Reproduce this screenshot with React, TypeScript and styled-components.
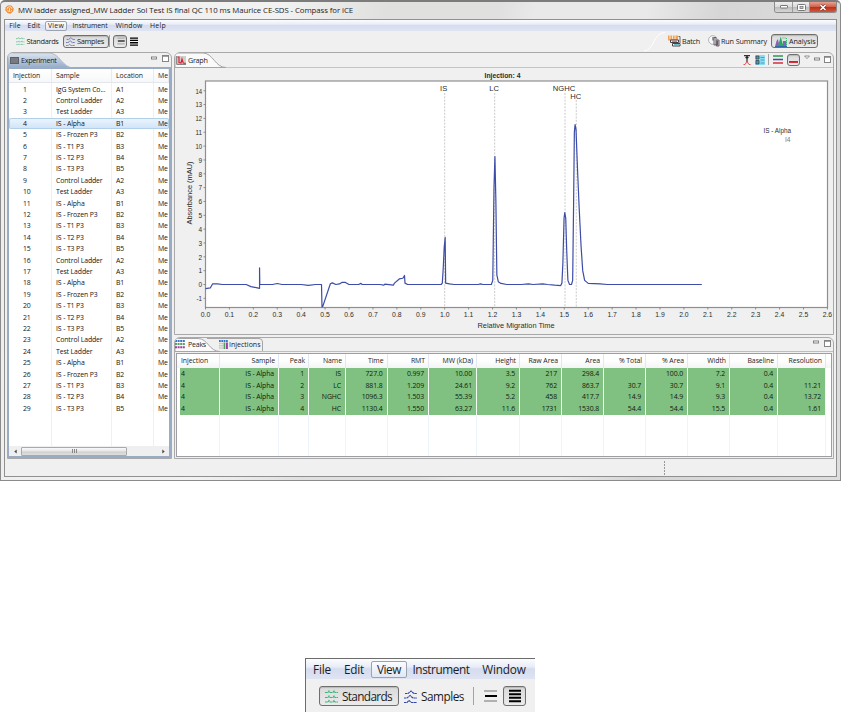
import React from 'react';
import styled, { createGlobalStyle, css } from 'styled-components';

const UI = '"Open Sans", "Noto Sans", sans-serif';
const ARIAL = '"Liberation Sans", Arial, sans-serif';

const GlobalStyle = createGlobalStyle`
  * { box-sizing: border-box; }
  body { margin: 0; background: #fff; font-family: ${UI}; color: #1c1c1c; }
  svg { display: block; flex: none; }
`;

/* ---------- text tracked to a given width ---------- */

const ctx = document.createElement('canvas').getContext('2d')!;

const Tracked = styled.span<{ $size: number; $weight: number }>`
  font-family: ${UI};
  font-size: ${(p) => p.$size}px;
  font-weight: ${(p) => p.$weight};
  white-space: pre;
  flex: none;
  display: block;
`;

function FitText({ text, width, size, weight = 400 }: { text: string; width: number; size: number; weight?: number }) {
  ctx.font = `${weight} ${size}px ${UI}`;
  const spacing = (width - ctx.measureText(text).width) / text.length;
  return (
    <Tracked $size={size} $weight={weight} style={{ letterSpacing: spacing, width }}>
      {text}
    </Tracked>
  );
}

/* ---------- page and window frame ---------- */

const Page = styled.div`
  width: 841px;
  height: 712px;
  overflow: hidden;
  display: flex;
  flex-direction: column;
  background: #fff;
`;

const Window = styled.div`
  width: 841px;
  height: 481px;
  border: 1px solid #8b8b8b;
  border-top: 2px solid #7c7c7c;
  border-radius: 5px 5px 0 0;
  background: linear-gradient(100deg, #ededed 0, #f2f2f2 30%, #e0e0de 42%, #e0e0e0 54%, #e9e9e9 58%, #e9e9e9 70%, #d6d6d6 78%, #dedede 100%);
  padding: 0 3px 3px 3px;
  display: flex;
  flex-direction: column;
`;

const TitleBar = styled.div`
  height: 16px;
  margin-bottom: 1px;
  display: flex;
  align-items: center;
  gap: 4px;
  padding: 0 0 1px 1px;
  flex: none;
`;

const CaptionButtons = styled.div`
  margin-left: auto;
  align-self: flex-start;
  display: flex;
  height: 11px;
  border: 1px solid #8c8c8c;
  border-top: 0;
  border-radius: 0 0 3px 3px;
  overflow: hidden;
`;

const CaptionButton = styled.div<{ $w: number; $close?: boolean }>`
  width: ${(p) => p.$w}px;
  display: flex;
  align-items: center;
  justify-content: center;
  background: ${(p) =>
    p.$close ? 'linear-gradient(#e6a193, #d2604a 48%, #bd3018 52%, #d0583c)' : 'linear-gradient(#efefef, #d9d9d9 50%, #bcbcbc 52%, #d6d6d6)'};
  & + & { border-left: 1px solid #999; }
`;

const Client = styled.div`
  flex: 1;
  border: 1px solid #909090;
  background: #f0f0f0;
  display: flex;
  flex-direction: column;
  min-height: 0;
`;

const MenuBar = styled.div<{ $h: number }>`
  height: ${(p) => p.$h}px;
  flex: none;
  display: flex;
  align-items: center;
  background: linear-gradient(#fbfcfe 0, #e9edf7 38%, #d5dcee 50%, #dfe4f3 100%);
`;

const MenuItem = styled.div<{ $w: number; $h: number; $ml: number; $open?: boolean }>`
  width: ${(p) => p.$w}px;
  height: ${(p) => p.$h}px;
  margin-left: ${(p) => p.$ml}px;
  border: 1px solid ${(p) => (p.$open ? '#9ba2b0' : 'transparent')};
  border-radius: 2px;
  display: flex;
  align-items: center;
  justify-content: center;
  ${(p) => p.$open && css`background: linear-gradient(#fbfcff, #e2e7f3);`}
`;

const ToolBar = styled.div`
  height: 21px;
  flex: none;
  display: flex;
  align-items: center;
  padding: 0 18px 1px 7px;
`;

const ToolButton = styled.div<{ $w: number; $h: number; $gap?: number; $ml?: number; $on?: boolean; $pad?: number }>`
  width: ${(p) => p.$w}px;
  height: ${(p) => p.$h}px;
  margin-left: ${(p) => p.$ml ?? 0}px;
  padding-left: ${(p) => p.$pad ?? 0}px;
  gap: ${(p) => p.$gap ?? 3}px;
  display: flex;
  flex: none;
  align-items: center;
  border-radius: 3px;
  border: 1px solid transparent;
  ${(p) =>
    p.$on &&
    css`
      border-color: #6f6f6f;
      background: linear-gradient(#dadada, #ebebeb);
      box-shadow: inset 0 1px 1px #b9b9b9;
    `}
`;

const Divider = styled.div<{ $h: number; $ml: number }>`
  width: 1px;
  height: ${(p) => p.$h}px;
  margin-left: ${(p) => p.$ml}px;
  background: #a3a3a3;
  flex: none;
`;

const PerspectiveEdge = styled.div`
  margin-left: auto;
  height: 21px;
`;

const Workbench = styled.div`
  display: flex;
  height: 407px;
  flex: none;
  padding-left: 2px;
  gap: 2px;
`;

const StatusBar = styled.div`
  flex: 1;
  display: flex;
  padding: 2px 0 0 659px;
`;

const Grip = styled.div`
  width: 1px;
  height: 14px;
  background: repeating-linear-gradient(#999 0 2px, transparent 2px 3px);
`;

/* ---------- view panels ---------- */

const Panel = styled.div<{ $w: number; $h: number }>`
  width: ${(p) => p.$w}px;
  height: ${(p) => p.$h}px;
  border: 1px solid #a9a9a9;
  border-radius: 6px 6px 0 0;
  overflow: hidden;
  display: flex;
  flex-direction: column;
  flex: none;
`;

const RightColumn = styled.div`
  display: flex;
  flex-direction: column;
  gap: 2px;
`;

const TabStrip = styled.div<{ $h: number; $line: string }>`
  height: ${(p) => p.$h}px;
  flex: none;
  display: flex;
  align-items: center;
  position: relative;
  border-bottom: 1px solid ${(p) => p.$line};
`;

const TabShape = styled.svg`
  position: absolute;
  left: 0;
  top: 0;
`;

const Tab = styled.div<{ $w: number; $pad: number; $gap?: number }>`
  width: ${(p) => p.$w}px;
  padding-left: ${(p) => p.$pad}px;
  height: 100%;
  display: flex;
  align-items: center;
  gap: ${(p) => p.$gap ?? 2}px;
  position: relative;
`;

const ViewControls = styled.div<{ $gap: number; $r: number; $lift?: number }>`
  margin-left: auto;
  margin-right: ${(p) => p.$r}px;
  padding-bottom: ${(p) => p.$lift ?? 0}px;
  display: flex;
  gap: ${(p) => p.$gap}px;
  align-items: center;
`;

/* ---------- experiment list ---------- */

const BlueFrame = styled.div`
  flex: 1;
  background: #9aacc5;
  padding: 1px 2px 2px 1px;
  min-height: 0;
`;

const ListBox = styled.div`
  height: 100%;
  background: #fff;
  display: flex;
  flex-direction: column;
  overflow: hidden;
`;

const listGrid = css`
  display: grid;
  grid-template-columns: 43px 60px 42px 1fr;
`;

const ListHead = styled.div`
  ${listGrid}
  height: 14px;
  flex: none;
  background: linear-gradient(#fff, #f6f7f9);
  border-bottom: 1px solid #e3e6ea;
  align-items: center;
  font-size: 6.9px;
  > * { height: 13px; line-height: 14px; padding-left: 4px; border-right: 1px solid #e6ebf1; overflow: hidden; white-space: nowrap; letter-spacing: -0.05px; }
`;

const ListRows = styled.div`
  flex: 1;
  padding-top: 0.5px;
  background-image: linear-gradient(#e9f2fa, #e9f2fa), linear-gradient(#e9f2fa, #e9f2fa), linear-gradient(#e9f2fa, #e9f2fa);
  background-size: 1px 100%;
  background-repeat: no-repeat;
  background-position: 42px 0, 102px 0, 144px 0;
  min-height: 0;
`;

const ListRow = styled.div<{ $selected?: boolean }>`
  ${listGrid}
  height: 11.41px;
  line-height: 11.8px;
  font-size: 6.9px;
  color: #151515;
  white-space: nowrap;
  overflow: hidden;
  > * { padding-left: 4px; overflow: hidden; letter-spacing: -0.12px; }
  > :first-child { padding-left: 14px; }
  ${(p) =>
    p.$selected &&
    css`
      background: linear-gradient(#edf5fd, #cfe3f7);
      box-shadow: inset 0 0 0 1px #b3d0ea;
      border-radius: 2px;
    `}
`;

const ScrollBar = styled.div`
  height: 10px;
  flex: none;
  display: flex;
  align-items: center;
  background: #efefef;
  padding: 0 4px 0 5px;
`;

const Thumb = styled.div`
  width: 106px;
  height: 9px;
  margin-left: 4px;
  margin-right: auto;
  border: 1px solid #a9a9a9;
  border-radius: 1px;
  background: linear-gradient(#f8f8f8, #e6e6e6 48%, #d0d0d0 52%, #dedede);
  display: flex;
  justify-content: center;
  align-items: center;
  gap: 1px;
  > i { width: 1px; height: 4px; background: #888; }
`;

/* ---------- peaks table ---------- */

const PeakFrame = styled.div`
  flex: 1;
  margin: 1px;
  border: 1px solid #9d9da5;
  background: #fff;
  padding: 0 0 0 3px;
  display: flex;
  flex-direction: column;
  min-height: 0;
`;

const PEAK_COLS = [40, 59, 30, 37, 41.5, 41.5, 48, 43, 42, 42, 42, 42, 42, 48, 48];
const peakGrid = css`
  display: grid;
  grid-template-columns: ${PEAK_COLS.map((w) => `${w}px`).join(' ')};
`;

const PeakHead = styled.div`
  ${peakGrid}
  height: 14px;
  flex: none;
  background: linear-gradient(#fff 40%, #f3f4f6);
  margin-left: -3px;
  padding-left: 3px;
  font-size: 6.9px;
  line-height: 14px;
  > div { text-align: right; padding-right: 3px; border-right: 1px solid #e4e8ee; white-space: nowrap; letter-spacing: -0.06px; }
  > div:first-child { text-align: left; padding-left: 1px; }
`;

const PeakRow = styled.div`
  ${peakGrid}
  height: 11.5px;
  line-height: 12px;
  font-size: 6.9px;
  > div {
    text-align: right;
    padding-right: 4px;
    border-right: 1px solid #f2faf2;
    background: #80c080;
    background-clip: padding-box;
    white-space: nowrap;
    color: #0d200d;
    letter-spacing: -0.12px;
  }
  > div:first-child { text-align: left; padding-left: 1px; }
`;

const PeakEmpty = styled.div`
  ${peakGrid}
  flex: 1;
  > div { border-right: 1px solid #edf4fb; }
`;

/* ---------- toolbar excerpt below the window ---------- */

const Excerpt = styled.div`
  width: 230px;
  height: 54px;
  margin: 177px 0 0 305px;
  border-top: 1px solid #6c6c6c;
  border-left: 1px solid #6c6c6c;
  background: #f0f0f0;
  display: flex;
  flex-direction: column;
`;

const ExcerptTools = styled.div`
  flex: 1;
  display: flex;
  align-items: center;
  padding: 1px 0 0 13px;
`;

/* ---------- icons ---------- */

const TraceIcon = ({ size, color, peaks }: { size: number; color: string; peaks?: boolean }) => (
  <svg width={size} height={size} viewBox="0 0 13 13" fill="none" stroke={color} strokeWidth="1.1">
    {peaks ? (
      <path d="M1 3.5H4L7 1L10 3.5H13M0 8H3L6 5.5L9 8H13M0 12.5H3L5 10.5L7.5 12.5H13" strokeDasharray="2.4 .4" />
    ) : (
      <path d="M0 2.5H3L4 1L5 2.5H8L9 1L10 2.5H13M0 7.5H3L4 6L5 7.5H8L9 6L10 7.5H13M0 12H3L4 10.5L5 12H8L9 10.5L10 12H13" strokeDasharray="2.6 .4" />
    )}
  </svg>
);

const BarsSingle = ({ w, h }: { w: number; h: number }) => (
  <svg width={w} height={h} viewBox="0 0 13 14">
    <path d="M0 2H13M0 12H13" stroke="#b0b0b0" strokeWidth="2" />
    <path d="M1 7H13" stroke="#000" strokeWidth="2" />
  </svg>
);

const BarsStack = ({ w, h }: { w: number; h: number }) => (
  <svg width={w} height={h} viewBox="0 0 13 14">
    <path d="M0 1.4H13M0 5.2H13M0 9H13M0 12.8H13" stroke="#000" strokeWidth="2.2" />
  </svg>
);

const AppIcon = () => (
  <svg width="9" height="9" viewBox="0 0 9 9">
    <path d="M3 .2L6.4 .6L8.8 3.4L8.4 6L5.6 8.8L2.8 8.2L.2 5.2L.8 2.2Z" fill="#f0913a" />
    <path d="M2 4.4A2.5 2.5 0 0 1 7 4M4.5 3V7M2.6 5L3.5 7M6.7 5L5.9 6.6" stroke="#fff0dc" strokeWidth=".8" fill="none" />
  </svg>
);

const BatchIcon = () => (
  <svg width="13" height="12" viewBox="0 0 13 12">
    <path d="M0 .5H10V5.500H0Z" fill="#f0a25a" />
    <path d="M2 0V4M4.5 0V4M7 0V4" stroke="#fff3df" strokeWidth=".8" />
    <path d="M2.500 5H10.500V7.500H2.500ZM4.500 8.500H12V11H4.500Z" fill="#fff" stroke="#4b4044" />
    <path d="M4 6.300H9" stroke="#b33f3f" strokeWidth=".8" />
    <path d="M6 9.800H11" stroke="#35a4b4" />
    <path d="M10.500 1.500H12V8" stroke="#666" fill="none" />
  </svg>
);

const RunIcon = () => (
  <svg width="12" height="12" viewBox="0 0 12 12">
    <circle cx="4.800" cy="5" r="4.300" fill="#f9f9f9" stroke="#a0a4aa" strokeWidth=".8" />
    <path d="M5 2V5.500" stroke="#444" fill="none" />
    <path d="M6 2.500H8V10H6ZM9 5H11V11H8.400Z" fill="#e4e4e8" stroke="#4a444e" strokeWidth=".8" />
    <path d="M9.700 6V10.500" stroke="#8c2638" strokeWidth="1" />
  </svg>
);

const AnalysisIcon = () => (
  <svg width="12" height="11" viewBox="0 0 12 11">
    <path d="M0 10.500L1.500 5L3 3L4.500 10.500Z" fill="#8a5fc0" />
    <path d="M2.800 10.500L5.700 .5L8.500 10.500Z" fill="#2fa663" />
    <path d="M8 10.500V5H11.500V10.500Z" fill="#7c63c8" />
    <path d="M7.500 2H11.500V9" stroke="#3bb26b" strokeDasharray="1 1" fill="none" />
    <path d="M0 10.500H12" stroke="#3168a9" />
  </svg>
);

const GraphIcon = () => (
  <svg width="10" height="9" viewBox="0 0 10 9">
    <path d="M1 0H10V8H1Z" fill="#cfcfcf" />
    <path d="M.7 0V8.400H10" stroke="#777" fill="none" />
    <path d="M1.500 1H3V6.500L5 7L6 3L7.200 7L9.800 7.400" stroke="#dc2430" strokeWidth="1.200" fill="none" />
  </svg>
);

const GridIcon = ({ column }: { column?: boolean }) => (
  <svg width={column ? 9 : 10} height="9" viewBox="0 0 10 9" preserveAspectRatio="none">
    <path d="M0 1H10" stroke="#3a76c4" strokeWidth="2" strokeDasharray="2 .6" />
    {column ? (
      <>
        <path d="M0 3.500H5M0 5.700H5M0 8H5" stroke="#c3c5ba" strokeWidth="1.600" strokeDasharray="2 .5" />
        <path d="M6 2.400V9" stroke="#4ba55c" strokeWidth="1.800" />
        <path d="M8.800 2.400V9" stroke="#a43aa6" strokeWidth="2.200" />
      </>
    ) : (
      <>
        <path d="M0 4H10" stroke="#50a469" strokeWidth="1.800" strokeDasharray="2 .6" />
        <path d="M0 7.300H10" stroke="#a53f99" strokeWidth="2" strokeDasharray="2 .6" />
      </>
    )}
  </svg>
);

const MinIcon = () => (
  <svg width="6" height="6" viewBox="0 0 6 6">
    <rect x=".5" y="1" width="5" height="2" fill="#fff" stroke="#777" strokeWidth=".9" />
  </svg>
);

const MaxIcon = () => (
  <svg width="7" height="7" viewBox="0 0 7 7">
    <rect x=".5" y=".5" width="6" height="6" fill="#fff" stroke="#858585" />
    <path d="M0 1H7" stroke="#858585" strokeWidth="1.300" />
  </svg>
);

const ScrollArrow = ({ right }: { right?: boolean }) => (
  <svg width="3" height="5" viewBox="0 0 3 5">
    <path d={right ? 'M.3 .6L2.7 2.5L.3 4.4Z' : 'M2.7 .6L.3 2.5L2.7 4.4Z'} fill="#444" />
  </svg>
);

/* ---------- data ---------- */

const SAMPLES: [string, string][] = [
  ['IgG System Co...', 'A1'], ['Control Ladder', 'A2'], ['Test Ladder', 'A3'],
  ['IS - Alpha', 'B1'], ['IS - Frozen P3', 'B2'], ['IS - T1 P3', 'B3'], ['IS - T2 P3', 'B4'], ['IS - T3 P3', 'B5'],
  ['Control Ladder', 'A2'], ['Test Ladder', 'A3'],
  ['IS - Alpha', 'B1'], ['IS - Frozen P3', 'B2'], ['IS - T1 P3', 'B3'], ['IS - T2 P3', 'B4'], ['IS - T3 P3', 'B5'],
  ['Control Ladder', 'A2'], ['Test Ladder', 'A3'],
  ['IS - Alpha', 'B1'], ['IS - Frozen P3', 'B2'], ['IS - T1 P3', 'B3'], ['IS - T2 P3', 'B4'], ['IS - T3 P3', 'B5'],
  ['Control Ladder', 'A2'], ['Test Ladder', 'A3'],
  ['IS - Alpha', 'B1'], ['IS - Frozen P3', 'B2'], ['IS - T1 P3', 'B3'], ['IS - T2 P3', 'B4'], ['IS - T3 P3', 'B5'],
];

const PEAK_HEADS = ['Injection', 'Sample', 'Peak', 'Name', 'Time', 'RMT', 'MW (kDa)', 'Height', 'Raw Area', 'Area', '% Total', '% Area', 'Width', 'Baseline', 'Resolution'];
const PEAKS = [
  ['4', 'IS - Alpha', '1', 'IS', '727.0', '0.997', '10.00', '3.5', '217', '298.4', '', '100.0', '7.2', '0.4', ''],
  ['4', 'IS - Alpha', '2', 'LC', '881.8', '1.209', '24.61', '9.2', '762', '863.7', '30.7', '30.7', '9.1', '0.4', '11.21'],
  ['4', 'IS - Alpha', '3', 'NGHC', '1096.3', '1.503', '55.39', '5.2', '458', '417.7', '14.9', '14.9', '9.3', '0.4', '13.72'],
  ['4', 'IS - Alpha', '4', 'HC', '1130.4', '1.550', '63.27', '11.6', '1731', '1530.8', '54.4', '54.4', '15.5', '0.4', '1.61'],
];

/* ---------- electropherogram ---------- */

const X0 = 31.5;
const Y0 = 217.5;
const px = (v: number) => X0 + v * 239.2;
const py = (v: number) => Y0 - v * 13.84;

const TRACE: [number, number][] = [
  [0, -0.3], [0.02, -0.25], [0.03, 0.05], [0.05, 0.04], [0.07, 0], [0.17, 0], [0.19, -0.15], [0.226, -0.28], [0.226, 1.2], [0.227, 0],
  [0.28, 0], [0.3, 0.07], [0.32, 0], [0.4, 0], [0.43, -0.06], [0.46, 0], [0.485, 0], [0.487, -1.6], [0.49, -1.6], [0.522, 0.05], [0.53, 0.12], [0.545, 0],
  [0.56, 0.04], [0.57, 0.15], [0.585, 0.15], [0.6, 0], [0.64, 0], [0.65, 0.08], [0.655, 0], [0.73, 0], [0.745, -0.05], [0.75, 0.03], [0.785, -0.05], [0.79, 0.1],
  [0.81, 0.4], [0.825, 0.45], [0.832, 0.65], [0.834, 0.1], [0.845, 0], [0.985, 0], [0.99, 0.1], [0.994, 1.2], [0.998, 2.7], [1.002, 3.4], [1.004, 0.1], [1.02, 0.05], [1.04, 0],
  [1.14, 0], [1.15, 0.05], [1.16, 0], [1.195, 0], [1.201, 0.3], [1.206, 7], [1.21, 9.25], [1.214, 6], [1.218, 0.7], [1.224, 0.2], [1.235, 0.08],
  [1.26, 0], [1.32, 0], [1.35, 0.05], [1.37, 0], [1.41, 0.05], [1.43, 0], [1.46, -0.05], [1.485, -0.08], [1.49, 0.1], [1.494, 1.5], [1.499, 4.8], [1.502, 5.2], [1.506, 4.8], [1.51, 2.5], [1.515, 0.3],
  [1.522, 0], [1.53, 0], [1.535, 0.3], [1.539, 6], [1.542, 11], [1.545, 11.55], [1.549, 11.2], [1.552, 9.8], [1.556, 8], [1.562, 5.6], [1.57, 2.8], [1.577, 1], [1.585, 0.3], [1.6, 0.08], [1.65, 0.04], [1.68, 0], [2.075, 0],
];

const MARKERS = [
  { name: 'IS', at: 1.0, row: 0, dx: -1 },
  { name: 'LC', at: 1.209, row: 0, dx: -0.5 },
  { name: 'NGHC', at: 1.503, row: 0, dx: -1 },
  { name: 'HC', at: 1.55, row: 1, dx: -0.5 },
];

function Electropherogram() {
  return (
    <svg width="658" height="265" viewBox="1 1 658 265" fontFamily={ARIAL} fontSize="7.6" fill="#2c2c2c">
      <rect x="31.5" y="14" width="622" height="226.500" fill="#fff" stroke="#8f8f8f" strokeWidth="1.200" />
      <text x="310.500" y="10.500" fontSize="6.800" fontWeight="700" textLength="36" lengthAdjust="spacingAndGlyphs">Injection: 4</text>
      {Array.from({ length: 16 }, (_, i) => i - 1).map((v) => (
        <g key={v}>
          <path d={`M29.5 ${py(v)}H31.5`} stroke="#777" strokeWidth=".8" />
          <text x="28" y={py(v) + 2.8} textAnchor="end" textLength={v > 9 ? 6.6 : v < 0 ? 5.5 : 3.6} lengthAdjust="spacingAndGlyphs">{v}</text>
        </g>
      ))}
      {Array.from({ length: 27 }, (_, i) => i / 10).map((v) => (
        <g key={v}>
          <path d={`M${px(v)} 240.5V242.5`} stroke="#777" strokeWidth=".8" />
          <text x={px(v)} y="250" textAnchor="middle" textLength="9.500" lengthAdjust="spacingAndGlyphs">{v.toFixed(1)}</text>
        </g>
      ))}
      <text x="303.500" y="261" textLength="77" lengthAdjust="spacingAndGlyphs">Relative Migration Time</text>
      <text transform="translate(17.5 157.5) rotate(-90)" textLength="63" lengthAdjust="spacingAndGlyphs">Absorbance (mAU)</text>
      {MARKERS.map((m) => (
        <g key={m.name}>
          <path d={`M${px(m.at)} ${m.row ? 33 : 26}V240`} stroke="#bcbcbc" strokeWidth=".8" strokeDasharray="2 1.3" />
          <text x={px(m.at) + m.dx} y={m.row ? 31.8 : 24} textAnchor="middle">{m.name}</text>
        </g>
      ))}
      <polyline points={TRACE.map(([x, y]) => `${px(x).toFixed(2)},${py(y).toFixed(2)}`).join(' ')} fill="none" stroke="#3c4ca8" strokeWidth="1.200" strokeLinejoin="round" />
      <text x="589.500" y="65.800" textLength="27.500" lengthAdjust="spacingAndGlyphs">IS - Alpha</text>
      <text x="616.500" y="75" textAnchor="end" fill="#777" textLength="5.500" lengthAdjust="spacingAndGlyphs">I4</text>
    </svg>
  );
}

/* ---------- views ---------- */

function ExperimentView() {
  return (
    <Panel $w={165} $h={407}>
      <TabStrip $h={15} $line="#9aacc5">
        <TabShape width="163" height="15">
          <defs>
            <linearGradient id="tabBlue" x1="0" y1="0" x2="0" y2="1">
              <stop offset="0" stopColor="#dce5f0" />
              <stop offset="1" stopColor="#94aac7" />
            </linearGradient>
          </defs>
          <path d="M0 0H41C52 0 54 15 66 15H0Z" fill="url(#tabBlue)" stroke="#a3b0c2" strokeWidth=".8" />
        </TabShape>
        <Tab $w={70} $pad={2} $gap={2}>
          <svg width="9" height="7"><rect x=".5" y=".5" width="8" height="6" fill="#777b80" stroke="#5c6168" /></svg>
          <FitText text="Experiment" width={35.5} size={7.2} />
        </Tab>
        <ViewControls $gap={5} $r={2} $lift={3}><MinIcon /><MaxIcon /></ViewControls>
      </TabStrip>
      <BlueFrame>
        <ListBox>
          <ListHead>
            <div>Injection</div>
            <div>Sample</div>
            <div>Location</div>
            <div>Me</div>
          </ListHead>
          <ListRows>
            {SAMPLES.map(([name, loc], i) => (
              <ListRow key={i} $selected={i === 3}>
                <span>{i + 1}</span>
                <span>{name}</span>
                <span>{loc}</span>
                <span>Me</span>
              </ListRow>
            ))}
          </ListRows>
          <ScrollBar>
            <ScrollArrow />
            <Thumb><i /><i /><i /></Thumb>
            <ScrollArrow right />
          </ScrollBar>
        </ListBox>
      </BlueFrame>
    </Panel>
  );
}

function GraphView() {
  return (
    <Panel $w={660} $h={283}>
      <TabStrip $h={15} $line="#c4c4c4">
        <TabShape width="60" height="15">
          <path d="M0 0H28C38 0 40 14.5 51 14.5H0Z" fill="#fafafa" stroke="#a5a5a5" />
        </TabShape>
        <Tab $w={60} $pad={1} $gap={2}>
          <GraphIcon />
          <FitText text="Graph" width={19.5} size={7.2} />
        </Tab>
        <ViewControls $gap={4} $r={2} $lift={1}>
          <svg width="8" height="10" viewBox="0 0 8 10">
            <path d="M1 .7H7" stroke="#333" strokeWidth="1.200" />
            <path d="M4 1V7M2.600 3L4 1.600L5.400 3" stroke="#222" fill="none" strokeWidth="1.200" />
            <path d="M.5 9.500H2L4 6.500L6 9.500H7.500" stroke="#ef4b4b" fill="none" strokeWidth="1" />
          </svg>
          <svg width="10" height="10" viewBox="0 0 10 10">
            <rect width="10" height="10" fill="#8adcf2" />
            <path d="M1 1H4V4H1ZM1 5.500H4V9H1Z" fill="#64909c" stroke="#2d4c59" strokeWidth=".8" />
            <path d="M5.500 2.500H9.500M5.500 5H9.500M5.500 8H9.500" stroke="#3b92b0" strokeWidth=".8" />
          </svg>
          <Divider $h={11} $ml={-1} />
          <svg width="10" height="9" viewBox="0 0 10 9">
            <path d="M0 1H10" stroke="#2b9c4d" strokeWidth="1.700" />
            <path d="M0 4.500H10" stroke="#3350b5" strokeWidth="1.700" />
            <path d="M0 8H10" stroke="#e12d35" strokeWidth="1.700" />
          </svg>
          <ToolButton $w={13} $h={12} $pad={1} $on>
            <svg width="9" height="9" viewBox="0 0 9 9">
              <path d="M0 6.500H9" stroke="#2c6f50" strokeWidth="1" />
              <path d="M0 7.500H9" stroke="#d6303a" strokeWidth="1" />
            </svg>
          </ToolButton>
          <svg width="6" height="9" viewBox="0 0 6 9"><path d="M.6 1H5.400L3 3.600Z" fill="#fff" stroke="#777" strokeWidth=".8" /></svg>
          <MinIcon />
          <MaxIcon />
        </ViewControls>
      </TabStrip>
      <Electropherogram />
    </Panel>
  );
}

function PeaksView() {
  return (
    <Panel $w={660} $h={122}>
      <TabStrip $h={14} $line="#bdbdbd">
        <TabShape width="100" height="14">
          <path d="M0 .5H23C33 .5 34 13.5 45 13.5H0Z" fill="#fafafa" stroke="#a5a5a5" />
          <path d="M32 .5H84Q87.5 .5 87.5 4V13" fill="none" stroke="#a5a5a5" />
        </TabShape>
        <Tab $w={44} $pad={0} $gap={3}>
          <GridIcon />
          <FitText text="Peaks" width={18} size={7} />
        </Tab>
        <Tab $w={60} $pad={0} $gap={1}>
          <GridIcon column />
          <FitText text="Injections" width={31.5} size={7} />
        </Tab>
        <ViewControls $gap={5} $r={2} $lift={3}><MinIcon /><MaxIcon /></ViewControls>
      </TabStrip>
      <PeakFrame>
        <PeakHead>{PEAK_HEADS.map((h) => <div key={h}>{h}</div>)}</PeakHead>
        {PEAKS.map((row, r) => (
          <PeakRow key={r}>{row.map((c, i) => <div key={i}>{c}</div>)}</PeakRow>
        ))}
        <PeakEmpty>{PEAK_HEADS.map((h) => <div key={h} />)}</PeakEmpty>
      </PeakFrame>
    </Panel>
  );
}

export default function App() {
  return (
    <Page>
      <GlobalStyle />
      <Window>
        <TitleBar>
          <AppIcon />
          <FitText text="MW ladder assigned_MW Ladder Sol Test IS final QC 110 ms Maurice CE-SDS - Compass for iCE" width={335} size={7.8} />
          <CaptionButtons>
            <CaptionButton $w={17}>
              <svg width="8" height="4"><rect x=".5" y=".5" width="7" height="2.500" rx=".5" fill="#fff" stroke="#777" /></svg>
            </CaptionButton>
            <CaptionButton $w={17}>
              <svg width="9" height="7"><rect x=".5" y=".5" width="8" height="6" rx="1" fill="#fff" stroke="#777" /><rect x="3" y="2.500" width="3" height="2" fill="#ccc" stroke="#777" strokeWidth=".8" /></svg>
            </CaptionButton>
            <CaptionButton $w={27} $close>
              <svg width="8" height="7" viewBox="0 0 8 7"><path d="M1.500 1L6.500 6M6.500 1L1.500 6" stroke="#6e3028" strokeWidth="2.600" /><path d="M1.500 1L6.500 6M6.500 1L1.500 6" stroke="#fff" strokeWidth="1.600" /></svg>
            </CaptionButton>
          </CaptionButtons>
        </TitleBar>
        <Client>
          <MenuBar $h={11}>
            <MenuItem $w={16} $h={10} $ml={2}><FitText text="File" width={11.5} size={6.9} /></MenuItem>
            <MenuItem $w={18} $h={10} $ml={2}><FitText text="Edit" width={13} size={6.9} /></MenuItem>
            <MenuItem $w={22} $h={10} $ml={2} $open><FitText text="View" width={16} size={6.9} /></MenuItem>
            <MenuItem $w={38} $h={10} $ml={4}><FitText text="Instrument" width={35} size={6.9} /></MenuItem>
            <MenuItem $w={30} $h={10} $ml={5}><FitText text="Window" width={27} size={6.9} /></MenuItem>
            <MenuItem $w={18} $h={10} $ml={5}><FitText text="Help" width={16} size={6.9} /></MenuItem>
          </MenuBar>
          <ToolBar>
            <ToolButton $w={48} $h={13} $pad={3} $gap={2}>
              <TraceIcon size={8.5} color="#4db888" />
              <FitText text="Standards" width={32} size={7.4} />
            </ToolButton>
            <ToolButton $w={46} $h={13} $ml={3} $pad={2} $gap={2} $on>
              <TraceIcon size={9} color="#3f51ac" peaks />
              <FitText text="Samples" width={27} size={7.4} />
            </ToolButton>
            <Divider $h={12} $ml={0} />
            <ToolButton $w={14} $h={13} $ml={3} $pad={3} $on><BarsSingle w={8} h={8} /></ToolButton>
            <ToolButton $w={14} $h={13} $ml={1} $pad={1}><BarsStack w={8} h={9} /></ToolButton>
            <PerspectiveEdge>
              <svg width="22" height="21" viewBox="0 0 22 21"><path d="M0 20C10 20 9 1.5 21 1.5" fill="none" stroke="#fff" /></svg>
            </PerspectiveEdge>
            <ToolButton $w={38} $h={13} $ml={1} $gap={1}>
              <BatchIcon />
              <FitText text="Batch" width={18} size={7.2} />
            </ToolButton>
            <ToolButton $w={61} $h={13} $ml={2} $gap={1}>
              <RunIcon />
              <FitText text="Run Summary" width={46} size={7.2} />
            </ToolButton>
            <ToolButton $w={47} $h={14} $ml={3} $pad={3} $gap={2} $on>
              <AnalysisIcon />
              <FitText text="Analysis" width={26.5} size={7.2} />
            </ToolButton>
          </ToolBar>
          <Workbench>
            <ExperimentView />
            <RightColumn>
              <GraphView />
              <PeaksView />
            </RightColumn>
          </Workbench>
          <StatusBar><Grip /></StatusBar>
        </Client>
      </Window>
      <Excerpt>
        <MenuBar $h={20}>
          <MenuItem $w={26} $h={17} $ml={3}><FitText text="File" width={18} size={11.8} /></MenuItem>
          <MenuItem $w={28} $h={17} $ml={5}><FitText text="Edit" width={20} size={11.8} /></MenuItem>
          <MenuItem $w={36} $h={17} $ml={3} $open><FitText text="View" width={24} size={11.8} /></MenuItem>
          <MenuItem $w={62} $h={17} $ml={3}><FitText text="Instrument" width={57} size={11.8} /></MenuItem>
          <MenuItem $w={48} $h={17} $ml={8}><FitText text="Window" width={43.5} size={11.8} /></MenuItem>
        </MenuBar>
        <ExcerptTools>
          <ToolButton $w={80} $h={20} $pad={5} $gap={4} $on>
            <TraceIcon size={13} color="#35b97a" />
            <FitText text="Standards" width={50} size={11.8} />
          </ToolButton>
          <ToolButton $w={62} $h={20} $ml={4} $gap={4}>
            <TraceIcon size={13} color="#3146aa" peaks />
            <FitText text="Samples" width={43} size={11.8} />
          </ToolButton>
          <Divider $h={18} $ml={8} />
          <ToolButton $w={17} $h={20} $ml={9}><BarsSingle w={13} h={14} /></ToolButton>
          <ToolButton $w={23} $h={20} $ml={3} $pad={5} $on><BarsStack w={12} h={14} /></ToolButton>
        </ExcerptTools>
      </Excerpt>
    </Page>
  );
}
